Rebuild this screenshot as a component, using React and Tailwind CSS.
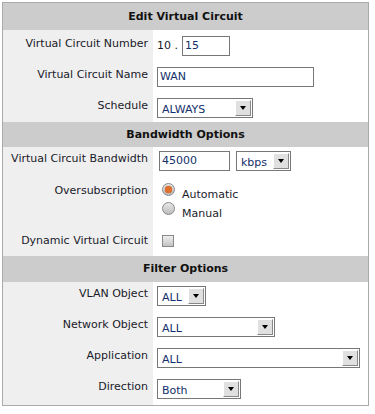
import React from 'react';

const font = { fontFamily: '"DejaVu Sans", Verdana, sans-serif' };

const Header = ({ children, className = '' }) => (
    <div className={`bg-[#cccccc] text-center font-bold text-[11px] text-[#111] ${className}`}>{children}</div>
);

const Row = ({ label, h = 'h-[31px]', children, top = 'pt-[6px]' }) => (
    <div className={`flex ${h}`}>
        <div className={`w-[150px] shrink-0 bg-[#efefef] text-right pr-[5px] text-[11px] text-[#1a1a2a] ${top}`}>{label}</div>
        <div className={`flex-1 bg-white pl-[4px] ${top}`}>{children}</div>
    </div>
);

const TextBox = ({ value, w }) => (
    <div className={`${w} h-[20px] border border-[#777] bg-white text-[11px] text-[#13306a] pl-[2px] leading-[18px]`}>{value}</div>
);

const Select = ({ value, w }) => (
    <div className={`${w} h-[20px] flex border border-[#777] bg-white`}>
        <div className="flex-1 text-[11px] text-[#13306a] pl-[4px] leading-[20px] pt-[1px]">{value}</div>
        <div className="w-[16px] h-[16px] mt-[1px] mr-[1px] bg-[#e0e0e0] border-t border-l border-t-white border-l-white border-r border-b border-r-[#888] border-b-[#888] flex items-center justify-center">
            <div className="w-0 h-0 border-l-[3px] border-r-[3px] border-t-[4px] border-l-transparent border-r-transparent border-t-black" />
        </div>
    </div>
);

const Radio = ({ checked }) => (
    <div className="w-[13px] h-[13px] shrink-0 rounded-full border border-[#888] bg-gradient-to-b from-[#e8e8e8] to-[#bdbdbd] flex items-center justify-center">
        {checked && <div className="w-[7px] h-[7px] rounded-full bg-[#e0702a] shadow-[0_0_1px_#a04010]" />}
    </div>
);

export default function App() {
    return (
        <div className="bg-white w-[375px] h-[414px] pt-[2px] pl-[2px]" style={font}>
            <div className="w-[367px] border border-[#aaaaaa]">
                <Header className="h-[27px] leading-[27px]">Edit Virtual Circuit</Header>
                <Row label="Virtual Circuit Number">
                    <div className="flex items-center text-[11px] text-[#1a1a2a]">
                        <span className="mr-[4px]">10 .</span>
                        <TextBox value="15" w="w-[48px]" />
                    </div>
                </Row>
                <Row label="Virtual Circuit Name">
                    <TextBox value="WAN" w="w-[157px]" />
                </Row>
                <Row label="Schedule" h="h-[30px]">
                    <Select value="ALWAYS" w="w-[96px]" />
                </Row>
                <Header className="h-[25px] leading-[25px]">Bandwidth Options</Header>
                <Row label="Virtual Circuit Bandwidth" top="pt-[4px]">
                    <div className="flex gap-[6px] pl-[2px]">
                        <TextBox value="45000" w="w-[71px]" />
                        <Select value="kbps" w="w-[55px]" />
                    </div>
                </Row>
                <Row label="Oversubscription" h="h-[50px]" top="pt-[5px]">
                    <div className="flex flex-col gap-[6px] pl-[5px] pt-[0px] text-[11px] text-[#1a1a2a]">
                        <label className="flex items-start gap-[7px] h-[13px]"><Radio checked /><span className="mt-[5px] leading-[13px]">Automatic</span></label>
                        <label className="flex items-start gap-[7px] h-[13px]"><Radio /><span className="mt-[5px] leading-[13px]">Manual</span></label>
                    </div>
                </Row>
                <Row label="Dynamic Virtual Circuit" h="h-[28px]" top="pt-[5px]">
                    <div className="pl-[5px] pt-[2px]">
                        <div className="w-[12px] h-[12px] border border-[#888] bg-gradient-to-b from-[#eeeeee] to-[#c4c4c4]" />
                    </div>
                </Row>
                <Header className="h-[26px] leading-[26px]">Filter Options</Header>
                <Row label="VLAN Object" top="pt-[4px]">
                    <Select value="ALL" w="w-[49px]" />
                </Row>
                <Row label="Network Object" top="pt-[4px]">
                    <Select value="ALL" w="w-[118px]" />
                </Row>
                <Row label="Application" top="pt-[4px]">
                    <Select value="ALL" w="w-[203px]" />
                </Row>
                <Row label="Direction" h="h-[30px]" top="pt-[4px]">
                    <Select value="Both" w="w-[84px]" />
                </Row>
            </div>
        </div>
    );
}
